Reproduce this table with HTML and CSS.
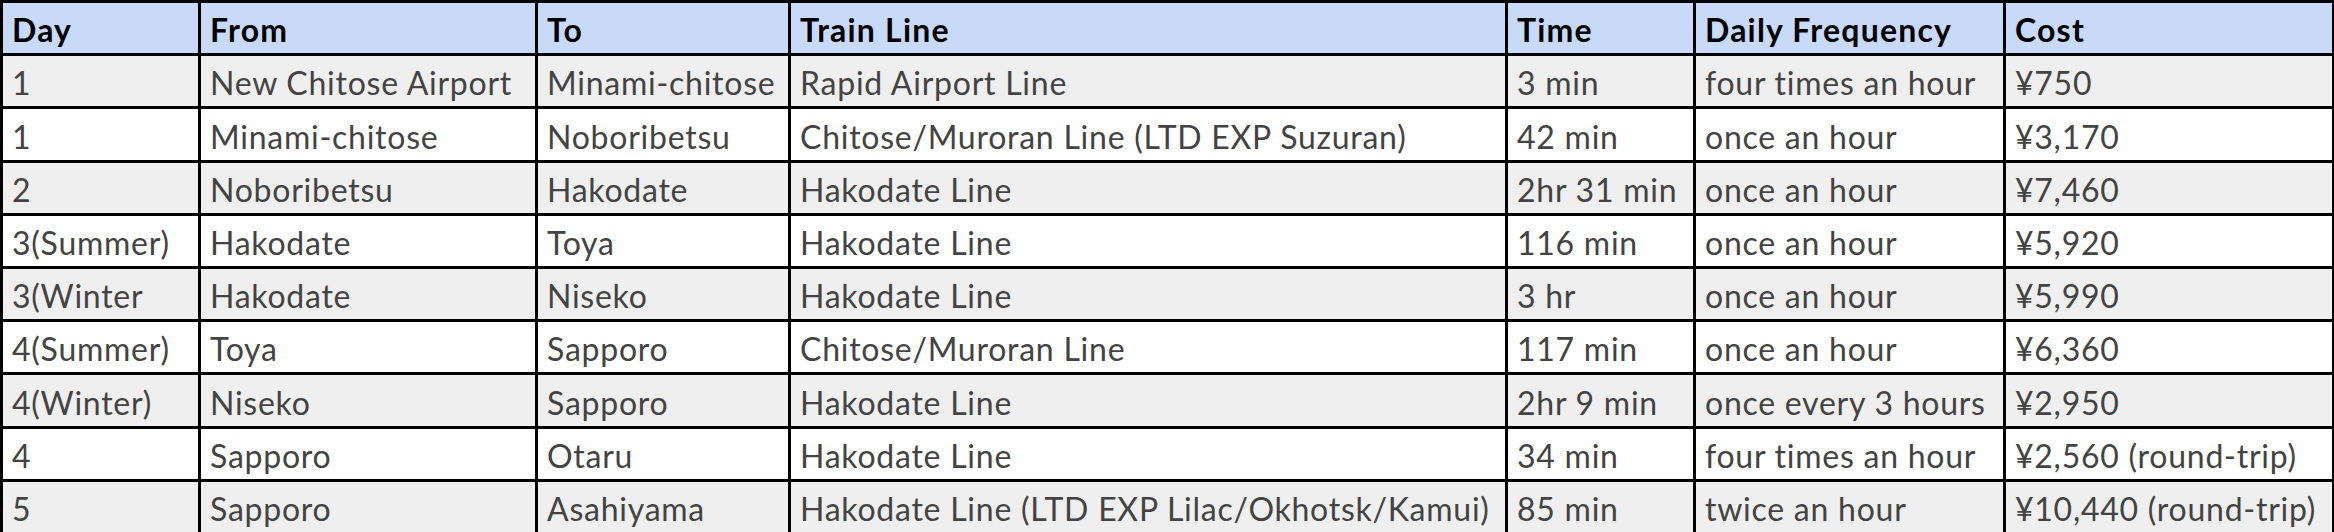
FILE: index.html
```html
<!DOCTYPE html>
<html lang="en">
<head>
<meta charset="utf-8">
<title>Hokkaido Train Routes</title>
<link rel="stylesheet" href="styles.css">
</head>
<body>
<table class="routes">
  <colgroup>
    <col class="c-day"><col class="c-from"><col class="c-to"><col class="c-line"><col class="c-time"><col class="c-freq"><col class="c-cost">
  </colgroup>
  <thead>
    <tr><th>Day</th><th>From</th><th>To</th><th>Train Line</th><th>Time</th><th>Daily Frequency</th><th>Cost</th></tr>
  </thead>
  <tbody>
    <tr class="alt"><td>1</td><td>New Chitose Airport</td><td>Minami-chitose</td><td>Rapid Airport Line</td><td>3 min</td><td>four times an hour</td><td>¥750</td></tr>
    <tr><td>1</td><td>Minami-chitose</td><td>Noboribetsu</td><td>Chitose/Muroran Line (LTD EXP Suzuran)</td><td>42 min</td><td>once an hour</td><td>¥3,170</td></tr>
    <tr class="alt"><td>2</td><td>Noboribetsu</td><td>Hakodate</td><td>Hakodate Line</td><td>2hr 31 min</td><td>once an hour</td><td>¥7,460</td></tr>
    <tr><td>3(Summer)</td><td>Hakodate</td><td>Toya</td><td>Hakodate Line</td><td>116 min</td><td>once an hour</td><td>¥5,920</td></tr>
    <tr class="alt"><td>3(Winter</td><td>Hakodate</td><td>Niseko</td><td>Hakodate Line</td><td>3 hr</td><td>once an hour</td><td>¥5,990</td></tr>
    <tr><td>4(Summer)</td><td>Toya</td><td>Sapporo</td><td>Chitose/Muroran Line</td><td>117 min</td><td>once an hour</td><td>¥6,360</td></tr>
    <tr class="alt"><td>4(Winter)</td><td>Niseko</td><td>Sapporo</td><td>Hakodate Line</td><td>2hr 9 min</td><td>once every 3 hours</td><td>¥2,950</td></tr>
    <tr><td>4</td><td>Sapporo</td><td>Otaru</td><td>Hakodate Line</td><td>34 min</td><td>four times an hour</td><td>¥2,560 (round-trip)</td></tr>
    <tr class="alt"><td>5</td><td>Sapporo</td><td>Asahiyama</td><td>Hakodate Line (LTD EXP Lilac/Okhotsk/Kamui)</td><td>85 min</td><td>twice an hour</td><td>¥10,440 (round-trip)</td></tr>
  </tbody>
</table>
</body>
</html>
```
FILE: styles.css
```css
html, body {
  margin: 0;
  padding: 0;
  background: #ffffff;
}

.routes {
  border-collapse: collapse;
  table-layout: fixed;
  width: 2332px;
  font-family: Lato, "Open Sans", sans-serif;
  font-size: 32px;
  letter-spacing: 0.75px;
}

.c-day { width: 198px; }
.c-from { width: 337px; }
.c-to { width: 253px; }
.c-line { width: 717px; }
.c-time { width: 188px; }
.c-freq { width: 310px; }
.c-cost { width: 329px; }

.routes th,
.routes td {
  border: 3px solid #000000;
  height: 53.2px;
  box-sizing: border-box;
  padding: 0 2px 4px 9px;
  vertical-align: bottom;
  text-align: left;
  white-space: nowrap;
  overflow: hidden;
  line-height: 38px;
}

.routes th {
  background: #c9daf8;
  color: #000000;
  font-weight: 700;
  letter-spacing: 1.2px;
}

.routes td {
  color: #434343;
  background: #ffffff;
}

.routes tr.alt td {
  background: #efefef;
}
```
